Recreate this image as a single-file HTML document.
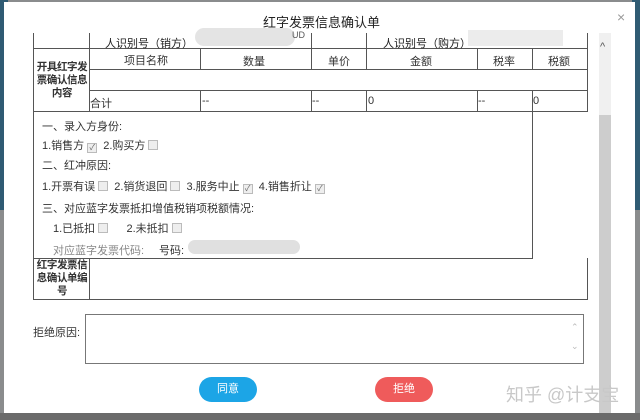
<!DOCTYPE html>
<html><head><meta charset="utf-8"><style>
body{margin:0;width:640px;height:420px;overflow:hidden;background:#8a8c8d;font-family:"Liberation Sans","Noto Sans CJK SC",sans-serif;font-size:11px;color:#333;position:relative}
.a{position:absolute;white-space:nowrap}
.m{position:absolute;left:4px;top:2px;width:631px;height:411px;background:#fff}
.l{position:absolute;background:#555}
.cb{display:inline-block;width:8px;height:8px;border:1px solid #bbb;background:#eee;vertical-align:-1px;margin:0 3px;font-size:8px;line-height:8px;text-align:center;color:#666}
.btn{position:absolute;height:25px;border-radius:13px;color:#fff;text-align:center;line-height:25px;font-size:11px}
.lab{position:absolute;width:56px;text-align:center;line-height:13px;white-space:normal;font-weight:bold;color:#333;font-size:10.5px;letter-spacing:-0.4px;word-break:break-all}
</style></head><body>
<div class="a" style="left:0;top:0;width:8px;height:210px;background:#2f5b73"></div>
<div class="a" style="left:632px;top:0;width:8px;height:210px;background:#2f5b73"></div>
<div class="m"></div>
<div class="a" style="left:0;top:413px;width:640px;height:7px;background:#6b6b6b"></div>
<div class="a" style="left:263px;top:12px;font-size:13px;color:#222">红字发票信息确认单</div>
<div class="a" style="left:617px;top:9px;font-size:14px;color:#999">×</div>
<div class="a" style="left:599px;top:33px;width:12px;height:380px;background:#f0f0f0"></div>
<div class="a" style="left:599px;top:115px;width:12px;height:298px;background:#cdcdcd"></div>
<div class="a" style="left:600px;top:41px;font-size:11px;color:#555">^</div>
<div class="l" style="left:33px;top:33px;width:1px;height:266px"></div>
<div class="l" style="left:587px;top:33px;width:1px;height:78px"></div>
<div class="l" style="left:587px;top:258px;width:1px;height:41px"></div>
<div class="l" style="left:89px;top:33px;width:1px;height:78px"></div>
<div class="l" style="left:89px;top:258px;width:1px;height:41px"></div>
<div class="l" style="left:311px;top:33px;width:1px;height:15px"></div>
<div class="l" style="left:366px;top:33px;width:1px;height:15px"></div>
<div class="l" style="left:200px;top:48px;width:1px;height:21px"></div>
<div class="l" style="left:311px;top:48px;width:1px;height:21px"></div>
<div class="l" style="left:366px;top:48px;width:1px;height:21px"></div>
<div class="l" style="left:477px;top:48px;width:1px;height:21px"></div>
<div class="l" style="left:532px;top:48px;width:1px;height:21px"></div>
<div class="l" style="left:200px;top:90px;width:1px;height:21px"></div>
<div class="l" style="left:311px;top:90px;width:1px;height:21px"></div>
<div class="l" style="left:366px;top:90px;width:1px;height:21px"></div>
<div class="l" style="left:477px;top:90px;width:1px;height:21px"></div>
<div class="l" style="left:532px;top:90px;width:1px;height:168px"></div>
<div class="l" style="left:33px;top:48px;width:555px;height:1px"></div>
<div class="l" style="left:89px;top:69px;width:499px;height:1px"></div>
<div class="l" style="left:89px;top:90px;width:499px;height:1px"></div>
<div class="l" style="left:33px;top:111px;width:555px;height:1px"></div>
<div class="l" style="left:33px;top:258px;width:500px;height:1px"></div>
<div class="l" style="left:33px;top:299px;width:555px;height:1px"></div>
<div class="a" style="left:105px;top:35px;color:#222">人识别号（销方）</div>
<div class="a" style="left:195px;top:28px;width:100px;height:18px;background:#e4e4e4;border-radius:9px"></div>
<div class="a" style="left:292px;top:30px;font-size:9px;color:#555">UD</div>
<div class="a" style="left:383px;top:35px;color:#222">人识别号（购方）</div>
<div class="a" style="left:468px;top:30px;width:95px;height:16px;background:#ececec"></div>
<div class="a" style="left:124px;top:52px">项目名称</div>
<div class="a" style="left:243px;top:53px">数量</div>
<div class="a" style="left:328px;top:53px">单价</div>
<div class="a" style="left:410px;top:53px">金额</div>
<div class="a" style="left:493px;top:53px">税率</div>
<div class="a" style="left:548px;top:53px">税额</div>
<div class="lab" style="left:34px;top:61px">开具红字发票确认信息内容</div>
<div class="a" style="left:90px;top:95px">合计</div>
<div class="a" style="left:202px;top:95px">--</div>
<div class="a" style="left:312px;top:95px">--</div>
<div class="a" style="left:368px;top:95px">0</div>
<div class="a" style="left:478px;top:95px">--</div>
<div class="a" style="left:533px;top:95px">0</div>
<div class="a" style="left:42px;top:118px">一、录入方身份:</div>
<div class="a" style="left:42px;top:137px">1.销售方<span class="cb">✓</span> 2.购买方<span class="cb"></span></div>
<div class="a" style="left:42px;top:157px">二、红冲原因:</div>
<div class="a" style="left:42px;top:178px">1.开票有误<span class="cb"></span> 2.销货退回<span class="cb"></span> 3.服务中止<span class="cb">✓</span> 4.销售折让<span class="cb">✓</span></div>
<div class="a" style="left:42px;top:200px">三、对应蓝字发票抵扣增值税销项税额情况:</div>
<div class="a" style="left:53px;top:220px">1.已抵扣<span class="cb"></span>&nbsp;&nbsp;&nbsp;&nbsp; 2.未抵扣<span class="cb"></span></div>
<div class="a" style="left:53px;top:242px;color:#888">对应蓝字发票代码:</div>
<div class="a" style="left:159px;top:242px">号码:</div>
<div class="a" style="left:188px;top:240px;width:112px;height:14px;background:#e0e0e0;border-radius:7px"></div>
<div class="lab" style="left:34px;top:259px">红字发票信息确认单编号</div>
<div class="a" style="left:33px;top:324px">拒绝原因:</div>
<div class="a" style="left:85px;top:314px;width:497px;height:48px;border:1px solid #777"></div>
<div class="a" style="left:571px;top:322px;font-size:9px;color:#bbb">⌃</div>
<div class="a" style="left:571px;top:341px;font-size:9px;color:#bbb">⌄</div>
<div class="btn" style="left:199px;top:377px;width:58px;background:#1ca5e6">同意</div>
<div class="btn" style="left:375px;top:377px;width:58px;background:#ef5b5b">拒绝</div>
<div class="a" style="left:506px;top:381px;font-size:18px;color:#c8c8c8">知乎 @计支宝</div>
</body></html>
